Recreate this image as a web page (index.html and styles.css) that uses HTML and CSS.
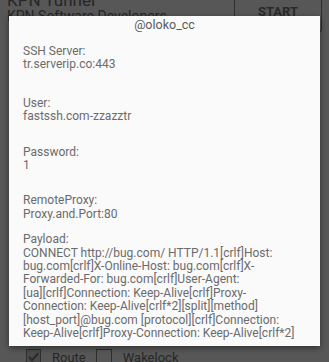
FILE: index.html
```html
<!DOCTYPE html>
<html>
<head>
<meta charset="utf-8">
<link rel="stylesheet" href="styles.css">
</head>
<body>
<div class="app">
  <div class="header">
    <div class="brand">
      <div class="app-title">KPN Tunnel</div>
      <div class="app-sub">KPN Software Developers</div>
    </div>
    <div class="start-btn">START</div>
  </div>
  <div class="spacer"></div>
  <div class="options">
    <span class="check checked">
      <svg width="14" height="14" viewBox="0 0 14 14"><path d="M2 7 L5.5 10.5 L12 3" fill="none" stroke="#2a2a2a" stroke-width="2.2"/></svg>
    </span>
    <span class="opt-label">Route</span>
    <span class="check"></span>
    <span class="opt-label">Wakelock</span>
  </div>
</div>

<div class="dialog">
  <div class="dialog-title">@oloko_cc</div>
  <div class="dialog-body">
    <div class="group g1"><div>SSH Server:</div><div>tr.serverip.co:443</div></div>
    <div class="group g2"><div>User:</div><div>fastssh.com-zzazztr</div></div>
    <div class="group g3"><div>Password:</div><div>1</div></div>
    <div class="group g4"><div>RemoteProxy:</div><div>Proxy.and.Port:80</div></div>
    <div class="group g5">
      <div>Payload:</div>
      <div class="payload">CONNECT http://bug.com/ HTTP/1.1[crlf]Host:<br>bug.com[crlf]X-Online-Host: bug.com[crlf]X-<br>Forwarded-For: bug.com[crlf]User-Agent:<br>[ua][crlf]Connection: Keep-Alive[crlf]Proxy-<br>Connection: Keep-Alive[crlf*2][split][method]<br>[host_port]@bug.com [protocol][crlf]Connection:<br>Keep-Alive[crlf]Proxy-Connection: Keep-Alive[crlf*2]</div>
    </div>
  </div>
</div>
</body>
</html>
```

FILE: styles.css
```css
html, body {
  margin: 0;
  padding: 0;
}
body {
  width: 329px;
  height: 362px;
  overflow: hidden;
  background: #575757;
  font-family: Roboto, "Noto Sans", sans-serif;
  position: relative;
}
.app {
  height: 362px;
  display: flex;
  flex-direction: column;
  color: #262626;
}
.header {
  display: flex;
  justify-content: space-between;
  align-items: flex-start;
  margin-top: -9px;
}
.brand {
  padding-left: 7px;
}
.app-title {
  font-size: 17px;
  line-height: 18px;
}
.app-sub {
  font-size: 14px;
  line-height: 16px;
  margin-top: -1px;
}
.start-btn {
  width: 88px;
  height: 41px;
  margin-right: 7px;
  border: 1px solid #2e2e2e;
  border-top: none;
  border-radius: 0 0 3px 3px;
  box-sizing: border-box;
  display: flex;
  align-items: flex-end;
  justify-content: center;
  padding-bottom: 12px;
  font-weight: bold;
  font-size: 13px;
  color: #2a2a2a;
}
.spacer {
  flex: 1;
}
.options {
  display: flex;
  align-items: center;
  padding-left: 26px;
  margin-bottom: -6px;
  height: 22px;
  font-size: 13px;
}
.check {
  width: 16px;
  height: 16px;
  box-sizing: border-box;
  border: 1px solid #2e2e2e;
  display: flex;
  align-items: center;
  justify-content: center;
}
.check.checked {
  width: 15px;
  background: #4a4a4a;
}
.opt-label {
  margin-left: 11px;
  margin-right: 10px;
}
.dialog {
  position: absolute;
  left: 9px;
  top: 16px;
  width: 311px;
  height: 330px;
  background: #fafafa;
  box-shadow: 0 2px 6px rgba(0,0,0,0.45);
  color: #6b6b6b;
  font-size: 12px;
}
.dialog-title {
  text-align: center;
  font-size: 12.5px;
  line-height: 18px;
  color: #5a5a5a;
}
.dialog-body {
  padding-left: 14px;
  line-height: 13.4px;
  white-space: nowrap;
}
.g1 { margin-top: 11px; }
.g2 { margin-top: 25px; }
.g3 { margin-top: 22px; }
.g4 { margin-top: 22px; }
.g5 { margin-top: 12px; }
```
